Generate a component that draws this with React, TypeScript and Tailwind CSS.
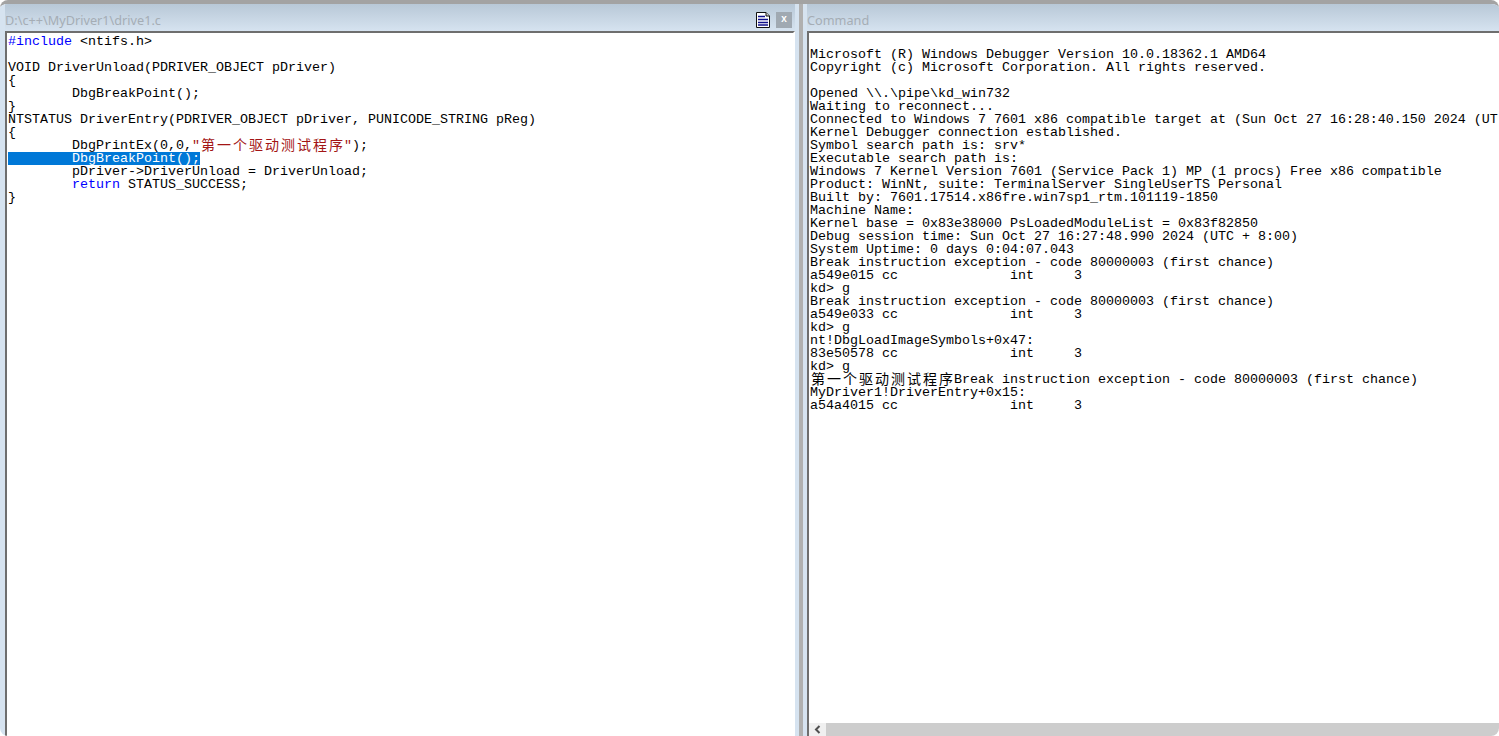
const mono = "font-['Liberation_Mono','Courier_New',monospace] text-[13.33px] leading-[13px]";

const commandLines = [
  '',
  'Microsoft (R) Windows Debugger Version 10.0.18362.1 AMD64',
  'Copyright (c) Microsoft Corporation. All rights reserved.',
  '',
  'Opened \\\\.\\pipe\\kd_win732',
  'Waiting to reconnect...',
  'Connected to Windows 7 7601 x86 compatible target at (Sun Oct 27 16:28:40.150 2024 (UT',
  'Kernel Debugger connection established.',
  'Symbol search path is: srv*',
  'Executable search path is:',
  'Windows 7 Kernel Version 7601 (Service Pack 1) MP (1 procs) Free x86 compatible',
  'Product: WinNt, suite: TerminalServer SingleUserTS Personal',
  'Built by: 7601.17514.x86fre.win7sp1_rtm.101119-1850',
  'Machine Name:',
  'Kernel base = 0x83e38000 PsLoadedModuleList = 0x83f82850',
  'Debug session time: Sun Oct 27 16:27:48.990 2024 (UTC + 8:00)',
  'System Uptime: 0 days 0:04:07.043',
  'Break instruction exception - code 80000003 (first chance)',
  'a549e015 cc              int     3',
  'kd> g',
  'Break instruction exception - code 80000003 (first chance)',
  'a549e033 cc              int     3',
  'kd> g',
  'nt!DbgLoadImageSymbols+0x47:',
  '83e50578 cc              int     3',
  'kd> g',
];

function Cjk({ children }: { children: string }) {
  return (
    <span className="inline-block align-top h-[13px] ml-[1px] -mr-[1px] -translate-y-[1px] leading-[13px] text-[14px] tracking-[2px] font-['Noto_Sans_CJK_SC',sans-serif]">
      {children}
    </span>
  );
}

function TitleBar({ title, children }: { title: string; children?: React.ReactNode }) {
  return (
    <div className="h-[27px] shrink-0 pt-[4px] flex items-center justify-between bg-gradient-to-b from-[#b8c8d7] to-[#d6e3f0]">
      <span className="mt-[2px] font-['Noto_Sans',sans-serif] text-[12.7px] text-[#a5adb5] whitespace-pre">{title}</span>
      {children}
    </div>
  );
}

function DocIcon() {
  return (
    <svg width="14" height="16" viewBox="0 0 14 16">
      <path d="M0.5 0.5H10L13.5 4V15.5H0.5Z" fill="#fff" stroke="#111" />
      <path d="M10 0.5V4H13.5" fill="#ccc" stroke="#111" />
      <path d="M2 4.5H9M2 7.5H12M2 10.5H12M2 13H12" stroke="#10108a" strokeWidth="1.5" />
    </svg>
  );
}

export default function App() {
  return (
    <div className="w-[1499px] h-[736px] bg-white overflow-hidden">
      <div className="h-full flex flex-col rounded-t-lg rounded-b-lg overflow-hidden border-t-[4px] border-[#a3a3a3]">
        <div className="flex-1 flex min-h-0">
          {/* source window */}
          <div className="w-[795px] shrink-0 flex flex-col pl-[5px] bg-[#d6e3f0]">
            <TitleBar title="D:\c++\MyDriver1\drive1.c">
              <div className="flex items-center gap-[6px] pr-[3px]">
                <DocIcon />
                <div className="w-[16px] h-[16px] bg-[#a0a9b2] flex items-center justify-center text-white text-[10px] leading-none font-bold font-['Liberation_Mono',monospace]">
                  x
                </div>
              </div>
            </TitleBar>
            <div className={`flex-1 bg-white border-t-2 border-l-2 border-[#6e6e6e] border-r-2 border-r-white pt-[2px] pl-[1px] whitespace-pre text-black ${mono}`}>
              <div><span className="text-[#0000ff]">#include</span> &lt;ntifs.h&gt;</div>
              <div>&nbsp;</div>
              <div>VOID DriverUnload(PDRIVER_OBJECT pDriver)</div>
              <div>{'{'}</div>
              <div>{'        DbgBreakPoint();'}</div>
              <div>{'}'}</div>
              <div>NTSTATUS DriverEntry(PDRIVER_OBJECT pDriver, PUNICODE_STRING pReg)</div>
              <div>{'{'}</div>
              <div className="h-[13px]">
                {'        DbgPrintEx(0,0,'}
                <span className="text-[#a31515]">"<Cjk>第一个驱动测试程序</Cjk>"</span>
                {');'}
              </div>
              <div><span className="inline-block w-[192px] bg-[#0078d7] text-white">{'        DbgBreakPoint();'}</span></div>
              <div>{'        pDriver->DriverUnload = DriverUnload;'}</div>
              <div>{'        '}<span className="text-[#0000ff]">return</span> STATUS_SUCCESS;</div>
              <div>{'}'}</div>
            </div>
          </div>

          {/* splitter */}
          <div className="w-[12px] shrink-0 flex">
            <div className="w-[4px] bg-[#d6e3f0]" />
            <div className="w-[4px] bg-[#b0b0b0]" />
            <div className="w-[4px] bg-[#d6e3f0]" />
          </div>

          {/* command window */}
          <div className="flex-1 min-w-0 flex flex-col">
            <TitleBar title="Command" />
            <div className="flex-1 min-h-0 flex flex-col border-t-2 border-l-2 border-[#6e6e6e]">
              <div className={`flex-1 min-h-0 overflow-hidden pt-[2px] pl-[1px] whitespace-pre text-black ${mono}`}>
                {commandLines.map((line, i) => (
                  <div key={i}>{line || '\u00a0'}</div>
                ))}
                <div className="h-[13px]"><Cjk>第一个驱动测试程序</Cjk>Break instruction exception - code 80000003 (first chance)</div>
                <div>MyDriver1!DriverEntry+0x15:</div>
                <div>a54a4015 cc              int     3</div>
              </div>
              <div className="h-[13px] shrink-0 bg-[#cdcdcd] flex">
                <div className="w-[17px] bg-[#f0f0f0] flex items-center justify-center">
                  <svg width="7" height="9" viewBox="0 0 7 9">
                    <path d="M5.5 1L2 4.5L5.5 8" fill="none" stroke="#505050" strokeWidth="2" />
                  </svg>
                </div>
              </div>
            </div>
          </div>
        </div>
      </div>
    </div>
  );
}
